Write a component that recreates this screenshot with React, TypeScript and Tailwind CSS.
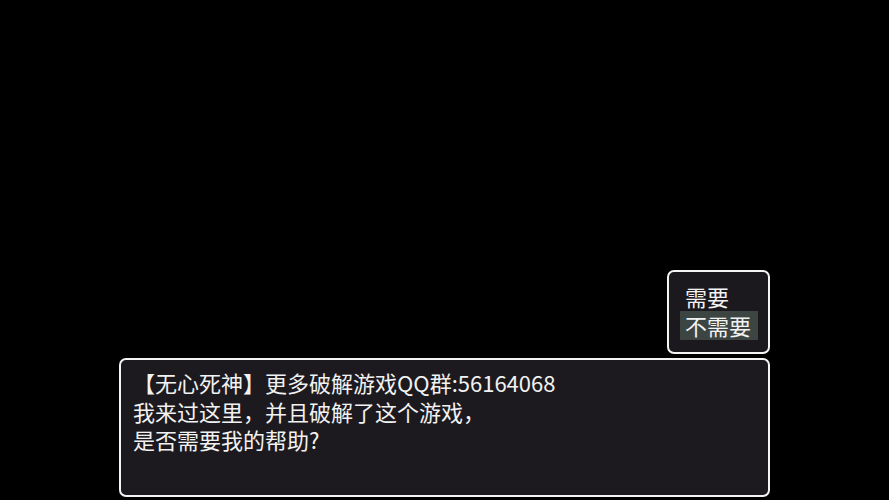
export default function App() {
  const font = { fontFamily: '"Noto Sans CJK SC", "Noto Sans", sans-serif' };
  return (
    <div
      className="w-[889px] h-[500px] bg-black flex flex-col justify-end items-center pb-[3px] text-[#f2f2f2]"
      style={font}
    >
      <div className="w-[651px] flex flex-col items-end gap-[4px]">
        {/* choice window */}
        <div className="w-[103px] h-[84px] border-2 border-[#f4f4f4] rounded-[7px] bg-[#1b191d] pl-[11px] pr-[10px] pt-[10px] text-[22px] leading-[29px]">
          <div className="h-[29px] px-[5px]">需要</div>
          <div className="h-[29px] px-[5px] bg-[#3d4542]">不需要</div>
        </div>
        {/* message window */}
        <div className="w-[651px] h-[139px] border-2 border-[#f4f4f4] rounded-[7px] bg-[#1c1a1e] pl-[12px] pt-[8px] text-[22px] leading-[28.5px]">
          <div>【无心死神】更多破解游戏QQ群:56164068</div>
          <div>我来过这里，并且破解了这个游戏，</div>
          <div>是否需要我的帮助?</div>
        </div>
      </div>
    </div>
  );
}
